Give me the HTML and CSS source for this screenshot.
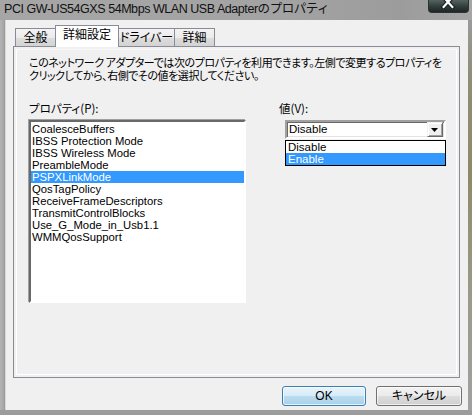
FILE: index.html
```html
<!DOCTYPE html>
<html lang="ja">
<head>
<meta charset="utf-8">
<title>Properties</title>
<link rel="stylesheet" href="styles.css">
</head>
<body>
<div class="window">
  <div class="titlebar">
    <span class="title">PCI GW-US54GXS 54Mbps WLAN USB Adapterのプロパティ</span>
    <div class="close">
      <svg width="41" height="13" viewBox="0 0 41 13">
        <path d="M16 -2 L25 8 M25 -2 L16 8" stroke="#1a2422" stroke-width="4.5" stroke-linecap="square" fill="none"/>
        <path d="M16 -2 L25 8 M25 -2 L16 8" stroke="#ffffff" stroke-width="2.2" stroke-linecap="square" fill="none"/>
      </svg>
    </div>
  </div>
  <div class="frame-row">
    <div class="frame-left"></div>
    <div class="client">
      <div class="tabs">
        <div class="tab t1">全般</div>
        <div class="tab active t2">詳細設定</div>
        <div class="tab t3">ドライバー</div>
        <div class="tab t4">詳細</div>
      </div>
      <div class="pane">
        <div class="page">
          <p class="desc">このネットワーク アダプターでは次のプロパティを利用できます。左側で変更するプロパティを<br>クリックしてから、右側でその値を選択してください。</p>
          <div class="cols">
            <div class="col-prop">
              <div class="label">プロパティ(P):</div>
              <ul class="listbox">
                <li>CoalesceBuffers</li>
                <li>IBSS Protection Mode</li>
                <li>IBSS Wireless Mode</li>
                <li>PreambleMode</li>
                <li class="sel">PSPXLinkMode</li>
                <li>QosTagPolicy</li>
                <li>ReceiveFrameDescriptors</li>
                <li>TransmitControlBlocks</li>
                <li>Use_G_Mode_in_Usb1.1</li>
                <li>WMMQosSupport</li>
              </ul>
            </div>
            <div class="col-val">
              <div class="label">値(V):</div>
              <div class="combo">
                <span class="combo-text">Disable</span>
                <span class="combo-btn">
                  <svg width="7" height="4" viewBox="0 0 7 4"><path d="M0 0 H7 L3.5 4 Z" fill="#000"/></svg>
                </span>
                <ul class="dropdown">
                  <li>Disable</li>
                  <li class="sel">Enable</li>
                </ul>
              </div>
            </div>
          </div>
        </div>
      </div>
      <div class="buttons">
        <button class="btn default">OK</button>
        <button class="btn cancel">キャンセル</button>
      </div>
    </div>
    <div class="frame-right"></div>
  </div>
  <div class="frame-bottom"></div>
</div>
</body>
</html>
```

FILE: styles.css
```css
* { box-sizing: border-box; }
html, body {
  margin: 0;
  padding: 0;
}
body {
  width: 472px;
  height: 415px;
  overflow: hidden;
  background: #a0a0a0;
  font-family: "Liberation Sans", "Noto Sans CJK JP", sans-serif;
  font-size: 12px;
  color: #000;
}
.window {
  width: 472px;
  height: 415px;
  display: flex;
  flex-direction: column;
}
.titlebar {
  height: 20px;
  display: flex;
  align-items: flex-start;
  background: linear-gradient(90deg, #a6a6a6 0%, #a3a3a3 60%, #9c9c9c 85%, #a5a5a5 100%);
}
.title {
  padding-left: 4px;
  line-height: 18px;
  font-size: 12.5px;
  letter-spacing: -0.45px;
  color: #111;
  font-family: "Liberation Sans", "Noto Sans CJK JP", sans-serif;
  white-space: nowrap;
}
.close {
  margin-left: auto;
  margin-right: 3px;
  width: 41px;
  height: 13px;
  border: 1px solid #2a3331;
  border-top: none;
  border-radius: 0 0 4px 4px;
  background: linear-gradient(#55635f, #34403d 50%, #1d2624);
  display: flex;
}
.close svg { display: block; margin: -1px 0 0 -1px; }
.frame-row {
  display: flex;
  height: 390px;
}
.frame-left {
  width: 6px;
  background: linear-gradient(90deg, #b4b4b4, #a9a9a9 50%, #9a9a9a 83%, #d8d8d8 84%);
}
.frame-right {
  width: 4px;
  background: linear-gradient(#9a9a9a 0%, #8f8c78 15%, #8d8a6a 40%, #9b9a8a 70%, #a0a0a0 100%);
}
.frame-bottom {
  height: 5px;
  background: #9c9c9c;
}
.client {
  width: 462px;
  background: #f0f0f0;
  padding: 5px 0 0 7px;
  display: flex;
  flex-direction: column;
}
.tabs {
  display: flex;
  align-items: flex-end;
  height: 22px;
  padding-left: 2px;
  margin-bottom: -1px;
  position: relative;
  z-index: 1;
}
.tab {
  height: 19px;
  border: 1px solid #898c95;
  background: linear-gradient(#f3f3f3, #ebebeb 50%, #dddddd 51%, #d3d3d3);
  font-family: "Noto Sans CJK JP", sans-serif;
  font-feature-settings: "palt";
  line-height: 14px;
  padding-top: 1px;
  text-align: center;
  margin-left: -1px;
}
.tab.t1 { width: 41px; margin-left: 0; }
.tab.t2 { width: 64px; }
.tab.t3 { width: 57px; }
.tab.t4 { width: 41px; }
.tab.active {
  height: 22px;
  background: #ffffff;
  border-bottom: none;
  position: relative;
  z-index: 2;
}
.pane {
  width: 447px;
  height: 332px;
  border: 1px solid #898c95;
  padding: 2px;
  background: #f0f0f0;
}
.page {
  height: 100%;
  border: 1px solid #ffffff;
  border-top-color: #f7f7f7;
  padding: 0 0 0 12px;
}
.desc {
  margin: 6px 0 0 0;
  font-family: "Noto Sans CJK JP", sans-serif;
  font-feature-settings: "palt";
  font-size: 11px;
  line-height: 13px;
  white-space: nowrap;
  letter-spacing: -0.45px;
}
.cols {
  display: flex;
  margin-top: 20px;
}
.label {
  font-family: "Noto Sans CJK JP", sans-serif;
  font-feature-settings: "palt";
  font-size: 11.5px;
  line-height: 13px;
  height: 13px;
}
.col-prop { width: 217px; }
.col-prop .label { margin-bottom: 5px; }
.listbox {
  list-style: none;
  margin: 0;
  width: 217px;
  height: 183px;
  padding: 1px 0 0 0;
  border-style: solid;
  border-width: 2px;
  border-color: #696969 #ffffff #ffffff #696969;
  box-shadow: -1px -1px 0 #a0a0a0;
  background: #fff;
  font-size: 11.3px;
}
.listbox li {
  height: 12px;
  line-height: 12px;
  padding-left: 1px;
  white-space: nowrap;
}
.listbox li.sel, .dropdown li.sel {
  background: #3399ff;
  color: #fff;
}
.col-val {
  margin-left: 33px;
}
.col-val .label { margin-bottom: 5px; }
.combo {
  position: relative;
  margin-left: 6px;
  width: 161px;
  height: 19px;
  border-style: solid;
  border-width: 2px;
  border-color: #a0a0a0 #ffffff #ffffff #a0a0a0;
  box-shadow: inset 1px 1px 0 #696969, inset -1px -1px 0 #e3e3e3;
  background: #fff;
  display: flex;
  align-items: center;
  font-size: 11.5px;
}
.combo-text {
  padding-left: 2px;
  line-height: 13px;
  flex: 1;
}
.combo-btn {
  width: 16px;
  height: 15px;
  margin-right: 1px;
  background: #f0f0f0;
  border-style: solid;
  border-width: 1px;
  border-color: #f0f0f0 #696969 #696969 #f0f0f0;
  box-shadow: inset 1px 1px 0 #ffffff, inset -1px -1px 0 #a0a0a0;
  display: flex;
  align-items: center;
  justify-content: center;
}
.combo-btn svg { display: block; margin-left: -1px; }
.dropdown {
  position: absolute;
  left: -2px;
  top: 18px;
  width: 161px;
  margin: 0;
  padding: 0;
  list-style: none;
  border: 1px solid #000;
  background: #fff;
}
.dropdown li {
  height: 12px;
  line-height: 12px;
  padding-left: 2px;
}
.buttons {
  display: flex;
  justify-content: flex-end;
  gap: 10px;
  padding-right: 6px;
  margin-top: 8px;
}
.btn {
  height: 20px;
  margin: 0;
  padding: 0;
  border: 1px solid #707070;
  border-radius: 3px;
  font-family: "Liberation Sans", "Noto Sans CJK JP", sans-serif;
  font-feature-settings: "palt";
  font-size: 12px;
  line-height: 16px;
  color: #000;
  background: linear-gradient(#f2f2f2, #ebebeb 50%, #dddddd 51%, #cfcfcf);
  box-shadow: inset 0 0 0 1px rgba(255,255,255,0.7);
}
.btn.default {
  width: 84px;
  border-color: #3c7fb1;
  background: linear-gradient(#e9f4fb, #d6ebf8 50%, #bcdcef 51%, #a9d0e8);
}
.btn.cancel { width: 86px; }
```
